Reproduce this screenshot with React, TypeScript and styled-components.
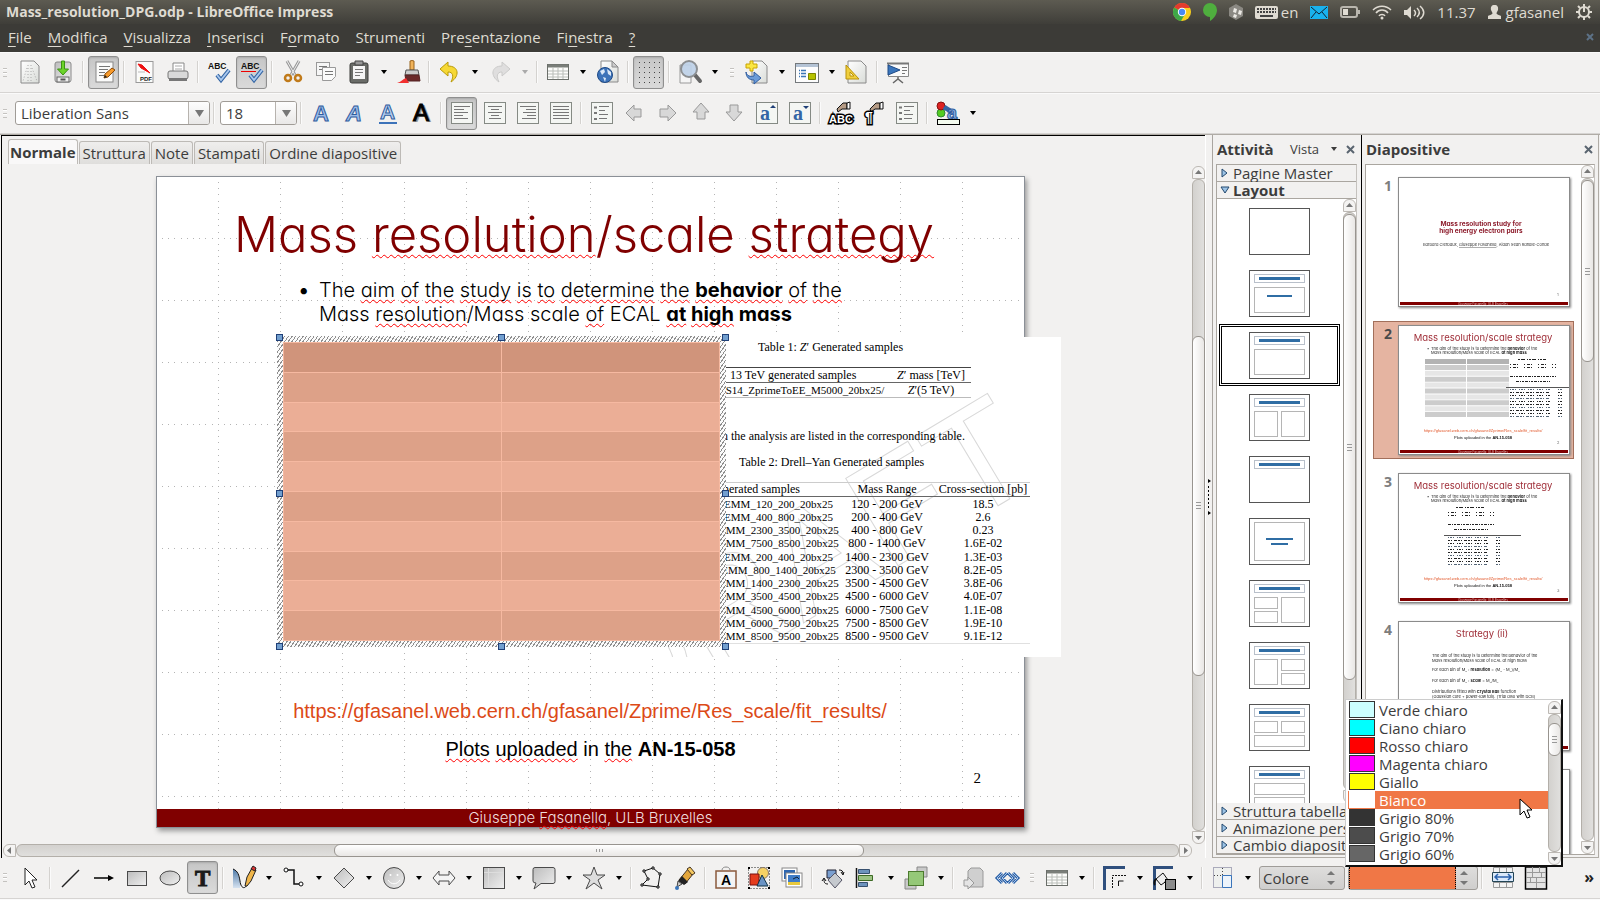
import React from "react";
import styled, { createGlobalStyle, css } from "styled-components";

const ui = `"Open Sans", "Noto Sans", sans-serif`;
const gothic = `Inter, "Open Sans", sans-serif`;
const book = `"Liberation Serif", serif`;

const Global = createGlobalStyle`
  * { box-sizing: border-box; }
  body { margin: 0; background: #f2f1f0; font: 15px/18px ${ui}; color: #3c3c3c; }
  button, input, select { font: inherit; color: inherit; margin: 0; padding: 0; border: 0; background: none; }
  ul { list-style: none; margin: 0; padding: 0; }
  h1, h2, p { margin: 0; font: inherit; }
`;

/* ---------- shell ---------- */
const Shell = styled.div`
  display: flex; flex-direction: column; height: 100vh; min-height: 640px; overflow: hidden;
`;
const Defs = styled.svg`position: absolute; width: 0; height: 0;`;
const TopPanel = styled.header`
  display: flex; align-items: center; justify-content: space-between; flex: none; height: 24px; padding: 0 8px 0 6px;
  background: linear-gradient(#5d5b51, #5a584f 10%, #3f3e39); color: #dfdbd2;
`;
const WindowTitle = styled.h1`font-size: 14px; font-weight: 700; white-space: nowrap;`;
const Tray = styled.div`display: flex; align-items: center; gap: 12px; font-size: 15px;`;
const TrayItem = styled.div<{ $gap?: number }>`display: flex; align-items: center; gap: ${p => p.$gap ?? 0}px; svg { display: block; }`;
const MenuBar = styled.nav`
  display: flex; align-items: center; flex: none; height: 28px; padding: 0 6px 2px 8px; gap: 16px; background: #3c3b37; color: #dfdbd2;
`;
const MenuItem = styled.button`font-size: 15px; line-height: 20px; white-space: nowrap; u { text-underline-offset: 3px; text-decoration-thickness: 1px; }`;
const MenuClose = styled.button`margin-left: auto; color: #5f7384; svg { display: block; }`;

/* ---------- toolbars ---------- */
const Toolbar = styled.div`
  display: flex; align-items: center; flex: none; height: 41px; overflow: hidden;
  background: #f2f1f0; border-bottom: 1px solid #d6d4d2; box-shadow: inset 0 1px #fafafa;
`;
const BottomBar = styled(Toolbar)`height: 42px; padding-bottom: 3px; overflow: visible; border-bottom: 0; box-shadow: inset 0 -1px #fafafa, inset 0 -2px #d6d4d2;`;
const Grip = styled.span<{ $wide?: boolean }>`
  flex: none; width: ${p => (p.$wide ? 17 : 13)}px; height: 9px;
  background: repeating-linear-gradient(#c4c2bf 0 1px, #fff 1px 2px, transparent 2px 4px) ${p => (p.$wide ? 7 : 3)}px 0 / 4px 9px no-repeat;
`;
const Rule = styled.span`flex: none; width: 8px; height: 22px; background: linear-gradient(90deg, #d4d2cf 1px, #fbfbfb 1px) 3px 0 / 2px 22px no-repeat;`;
const Tool = styled.button<{ $on?: boolean; $off?: boolean }>`
  display: flex; align-items: center; justify-content: center; flex: none; width: 31px; height: 33px; margin: 0 1px;
  border: 1px solid transparent; border-radius: 3px; opacity: ${p => (p.$off ? 0.45 : 1)};
  ${p => p.$on && css`background: linear-gradient(#c6c6c6, #dadada); border-color: #8f8f8f; box-shadow: inset 0 1px 2px #aaa;`}
  svg { width: 24px; height: 24px; display: block; overflow: visible; }
`;
const Arrow = styled.button<{ $off?: boolean }>`
  flex: none; width: 17px; height: 33px; display: flex; align-items: center; justify-content: center; color: ${p => (p.$off ? "#aaa" : "#000")};
  svg { display: block; }
`;
const Combo = styled.div<{ $w: number }>`
  display: flex; flex: none; width: ${p => p.$w}px; height: 24px; margin-left: 2px; border: 1px solid #a09c97; border-radius: 3px; background: #fff; overflow: hidden;
  input { flex: 1; min-width: 0; padding-left: 5px; font-size: 15px; }
  button { width: 21px; border-left: 1px solid #b7b3ae; background: linear-gradient(#fdfdfd, #e9e8e7); display: flex; align-items: center; justify-content: center; }
`;
const PickBox = styled.div<{ $w: number }>`
  position: relative; flex: none; width: ${p => p.$w}px; height: 24px; margin-left: 3px; border: 1px solid #9f9c98; border-radius: 3px;
  background: linear-gradient(#dedddc, #cfcecd);
  select { appearance: none; display: block; width: 100%; height: 22px; padding-left: 3px; font-size: 15px; line-height: 20px; }
`;
const Spin = styled.svg`position: absolute; right: 7px; top: 3px; pointer-events: none;`;
const FillSelect = styled.select`&& { width: 107px; background: #f07746; border-left: 1px dotted #000; border-right: 1px dotted #000; }`;
const More = styled.button`margin-left: auto; padding: 0 6px 2px; font-size: 16px; line-height: 16px; font-weight: 700; color: #222;`;

/* ---------- main area ---------- */
const Main = styled.main`display: flex; flex: 1; min-height: 0; border-top: 1px solid #b0aca6;`;
const Editor = styled.section`
  display: flex; flex: 1; min-width: 0; border-top: 1px solid #000; border-left: 1px solid #000; margin-left: 1px;
`;
const EditorPane = styled.div`flex: 1; min-width: 0; display: flex; flex-direction: column;`;
const ScrollSide = styled.div`flex: none; display: flex; padding: 30px 0 14px;`;
const Tabs = styled.div`display: flex; align-items: flex-end; gap: 1px; height: 28px; padding-left: 6px;`;
const Tab = styled.button<{ $on?: boolean }>`
  height: ${p => (p.$on ? 25 : 23)}px; padding: 0 ${p => (p.$on ? 1 : 3)}px 1px; font-size: 15px; white-space: nowrap; border: 1px solid #bdbab6; border-bottom: 0; border-radius: 3px 3px 0 0;
  font-weight: ${p => (p.$on ? 700 : 400)}; background: ${p => (p.$on ? "#f9f8f8" : "linear-gradient(#efeeed, #dfdedc)")};
`;
const Workspace = styled.div`flex: 1; min-height: 0; display: flex; justify-content: center; align-items: flex-start; padding: 12px 13px 0 0;`;
const Slide = styled.article`
  position: relative; flex: none; width: 869px; height: 652px; background: #fff; border: 1px solid #8b9097; box-shadow: 2px 3px 5px #999;
  color: #000;
`;
const Dots = styled.svg`position: absolute; inset: 0; width: 100%; height: 100%;`;

const Title = styled.h2`
  position: absolute; left: 0; right: 0; top: 28px; padding-right: 13px; text-align: center; white-space: nowrap;
  font: 300 49px/60px ${gothic}; font-feature-settings: "cv11"; color: #800000;
`;
const Typo = styled.span`text-decoration: underline wavy #f00 1px; text-underline-offset: 2px; text-decoration-skip-ink: none;`;
const Bullets = styled.ul`
  position: absolute; left: 162px; top: 101px; font: 300 20px/24px ${gothic}; font-feature-settings: "cv11"; white-space: nowrap;
  li { position: relative; } li::before { content: "•"; position: absolute; left: -20px; font-weight: 700; } b { font-weight: 700; }
`;
const Inset = styled.section`
  position: absolute; left: 483px; top: 160px; width: 421px; height: 320px; background: #fff; overflow: hidden; font: 12px/14px ${book};
  > svg { position: absolute; inset: 0; }
`;
const Caption = styled.p<{ $x: number; $y: number }>`position: absolute; left: ${p => p.$x}px; top: ${p => p.$y}px; white-space: nowrap;`;
const Data = styled.table<{ $y: number; $w: number }>`
  position: absolute; left: 79px; top: ${p => p.$y}px; width: ${p => p.$w}px; border-collapse: collapse; table-layout: fixed; font-size: 12px;
  border-top: 1px solid #444; border-bottom: 1px solid #bbb;
  th { font-weight: 400; border-bottom: 1px solid #666; } th, td { padding: 0; text-align: center; white-space: nowrap; }
  th:first-child { text-align: left; } td:first-child { font-size: 11px; }
`;
const Sample = styled(Data)`tr { height: 15px; line-height: 14px; } th:first-child { padding-left: 11px; }`;
const Yan = styled(Data)`
  height: 162px; border-top-color: #ccc; border-bottom-color: #e0e0e0; th { line-height: 13px; } td { line-height: 12px; }
  th:first-child { padding-left: 4px; }
`;

const Frame = styled.div`
  position: absolute; left: 120px; top: 159px; width: 449px; height: 311px; padding: 6px;
  background: repeating-linear-gradient(125deg, #8f8f8f 0 1px, #fbfbfb 1px 3px);
`;
const Grid = styled.table`
  width: 100%; height: 100%; border-collapse: collapse; background: #ebae96;
  td { padding: 0; border: 1px solid #f6b9a1; } tr:nth-child(even) { background: #dda188; } tr:first-child { background: #d0947b; }
`;
const Knob = styled.i<{ $x: number; $y: number }>`
  position: absolute; left: ${p => p.$x}%; top: ${p => p.$y}%; width: 7px; height: 7px; margin: ${p => (p.$y === 100 ? -4 : -2)}px 0 0 ${p => (p.$x ? -4 : -1)}px;
  background: #729fcf; border: 1px solid #1f4078;
`;
const Address = styled.a`position: absolute; left: 0; right: 0; top: 522px; padding-right: 1px; text-align: center; font: 20px/24px "Liberation Sans", sans-serif; color: #dc4a17; text-decoration: none;`;
const Plots = styled.p`position: absolute; left: 0; right: 0; top: 560px; text-align: center; font: 20px/24px "Liberation Sans", sans-serif;`;
const PageNo = styled.span`position: absolute; right: 43px; top: 592px; font: 15px/18px ${book};`;
const SlideFoot = styled.footer`
  position: absolute; left: 0; right: 0; bottom: 0; height: 18px; background: #800000; color: #f0dede; text-align: center; font: 300 15px/17px ${gothic}; font-feature-settings: "cv11";
`;

/* ---------- scroll bars ---------- */
const VBar = styled.div`display: flex; flex-direction: column; flex: none; width: 13px; min-height: 0;`;
const HBar = styled.div`display: flex; flex: none; height: 13px; margin: 0 0 1px 1px;`;
const End = styled.button<{ $r: string }>`
  flex: none; width: 13px; height: 13px; display: flex; align-items: center; justify-content: center; border: 1px solid #bdb9b4; border-radius: ${p => p.$r}; background: #f4f3f2; color: #777;
`;
const Trough = styled.div<{ $h?: boolean }>`
  display: flex; flex-direction: ${p => (p.$h ? "row" : "column")}; flex: 1; min-height: 0; border: 1px solid #b3afa9; border-radius: 6px;
  background: linear-gradient(${p => (p.$h ? "180deg" : "90deg")}, #d3d1ce, #e0dfdd);
`;
const Space = styled.span<{ $n: number }>`flex: ${p => p.$n} 1 0;`;
const Thumb = styled.span<{ $n: number; $h?: boolean }>`
  flex: ${p => p.$n} 1 0; margin: ${p => (p.$h ? "-1px 0" : "0 -1px")}; border: 1px solid #98948f; border-radius: 6px; display: flex; align-items: center; justify-content: center;
  background: linear-gradient(${p => (p.$h ? "180deg" : "90deg")}, #fff, #e9e7e5);
  &::after { content: ""; ${p => (p.$h
    ? "width: 7px; height: 3px; background: repeating-linear-gradient(90deg, #999 0 1px, transparent 1px 3px);"
    : "width: 5px; height: 7px; background: repeating-linear-gradient(#999 0 1px, transparent 1px 3px);")} }
`;

/* ---------- side panels ---------- */
const Splitter = styled.div`
  flex: none; width: 8px; border-left: 1px solid #fff; border-right: 1px solid #a9a5a0; display: flex; align-items: center; justify-content: center; svg { display: block; }
`;
const Side = styled.aside<{ $w: number; $line?: boolean }>`
  display: flex; flex-direction: column; flex: none; width: ${p => p.$w}px; padding: 0 4px 2px 3px; border-bottom: 1px solid #b0aca6;
  ${p => p.$line && css`border-left: 1px solid #000; border-right: 1px solid #b0aca6; padding-right: 3px; margin-right: 1px;`}
`;
const SideHead = styled.div`
  display: flex; align-items: center; flex: none; height: 29px; padding: 0 2px 1px 1px; gap: 9px;
  h2 { font-size: 15px; font-weight: 700; margin-right: auto; } button { display: flex; align-items: center; gap: 12px; font-size: 13px; color: #3c3c3c; }
`;
const SideBody = styled.div`display: flex; flex-direction: column; flex: 1; min-height: 0; overflow: hidden; border: 1px solid #aaa6a0; border-right-color: #c5c2be;`;
const Fold = styled.button<{ $open?: boolean }>`
  flex: none; display: flex; align-items: center; gap: 3px; height: 17px; padding-left: 3px; background: #f2f1f0; border-bottom: 1px solid #aaa6a0; white-space: nowrap; font-size: 15px; line-height: 16px;
  font-weight: ${p => (p.$open ? 700 : 400)}; svg { flex: none; }
`;
const ListRow = styled.div`display: flex; flex: 1; min-height: 0; background: #fff;`;
const Scroll = styled.ul<{ $p: string; $gap?: number }>`flex: 1; min-width: 0; min-height: 0; overflow: hidden; padding: ${p => p.$p}; display: flex; flex-direction: column; gap: ${p => p.$gap ?? 0}px;`;
const LayoutCell = styled.button<{ $on?: boolean }>`
  display: flex; align-items: center; justify-content: center; width: 100%; height: 62px; border: ${p => (p.$on ? "3px double #000" : "3px solid transparent")}; svg { display: block; }
`;
const ThumbItem = styled.button<{ $on?: boolean }>`
  display: flex; align-items: flex-start; justify-content: flex-end; gap: 6px; width: 201px; height: 138px; padding: 3px; border: 1px solid ${p => (p.$on ? "#a26f5b" : "transparent")};
  background: ${p => (p.$on ? "#e5b4a1" : "transparent")}; font-weight: 700; font-size: 14px; color: ${p => (p.$on ? "#4a4a4a" : "#7d7d7d")};
  svg { flex: none; display: block; font-weight: 400; filter: drop-shadow(1px 1px 1px #888); }
`;

/* ---------- colour list ---------- */
const Popup = styled.div`
  position: absolute; right: -86px; left: -4px; bottom: 100%; z-index: 3; display: flex; height: 168px; padding: 1px 0 0 2px; background: #fff;
  border: 1px solid #ccc; border-right: 2px solid #111; border-bottom: 2px solid #111; color: #3c3c3c;
  ul { flex: 1; min-width: 0; }
`;
const Swatch = styled.li<{ $c: string; $on?: boolean }>`
  display: flex; align-items: center; gap: 4px; height: 18px; padding-left: 1px; font-size: 15px; white-space: nowrap;
  color: ${p => (p.$on ? "#fff" : "#3c3c3c")}; background: ${p => (p.$on ? "#f07746" : "#fff")};
  &::before { content: ""; width: 24px; height: 15px; background: ${p => p.$c}; border: 1px solid ${p => (p.$on ? "#fff" : "#333")}; }
`;
const Pointer = styled.svg`position: absolute; left: 173px; top: 98px;`;

/* ---------- drawings ---------- */
const Caret = () => <svg width="6" height="4"><path d="M0 0h6L3 4z" fill="currentColor" /></svg>;
const Cross = () => <svg width="9" height="9"><path d="M1 1l7 7M8 1l-7 7" stroke="#5a6570" strokeWidth="2" /></svg>;
const Tip = ({ d }: { d: string }) => <svg width="7" height="7"><path d={d} fill="currentColor" /></svg>;
const UP = "M0 5h7L3.5 1z", DOWN = "M0 2h7L3.5 6z", LEFT = "M5 0v7L1 3.5z", RIGHT = "M2 0v7L6 3.5z";

const sheet = <path d="M3 1h13l5 5v17H3z" fill="url(#paper)" stroke="#8a8a8a" />;
const lines = (ys: number[][]) => <path d={ys.map(([x, y, w]) => `M${x} ${y}h${w}`).join("")} stroke="#777" />;
const box = <rect x="1.5" y="1.5" width="21" height="21" fill="#f4f6f3" stroke="#858a84" />;
const txt = (s: string, x: number, y: number, size: number, fill: string, extra: object = {}) => (
  <text x={x} y={y} fontSize={size} fill={fill} fontFamily="Liberation Sans, sans-serif" fontWeight="700" {...extra}>{s}</text>
);
const abc = <>{txt("ABC", 1, 9, 8.5, "#111")}<path d="M10 15l4 5 8-10" fill="none" stroke="#3465a4" strokeWidth="4" /><path d="M10 15l4 5 8-10" fill="none" stroke="#a9c8ee" strokeWidth="2" /></>;
const blue = { stroke: "#2f5c9e", strokeWidth: 1 };
const sheetGrid = <><rect x="1.5" y="4.5" width="21" height="15" fill="#fdfdfb" stroke="#6b6f6a" /><path d="M2 6h20" stroke="#7a7e79" strokeWidth="3" /><path d="M2 11h20M2 14h20M2 17h20M7 8v11M12 8v11M17 8v11" stroke="#b9bdb8" /></>;
const metal = { fill: "url(#steel)", stroke: "#4a4a4a" };
const hand = <><path d="M8 8l6-6h4v6h-5l-4 3z" fill="#b59b85" stroke="#111" /><path d="M18 2l3-1v7h-3z" fill="#fff" stroke="#111" /></>;

const art: Record<string, React.ReactNode> = {
  fresh: <>{sheet}<path d="M10 5v16M13 5v16M9 8L5 21M14 8l5 13" stroke="#aaa" strokeDasharray="1 2" /></>,
  save: <><rect x="4" y="2" width="16" height="20" rx="2" fill="url(#steel)" stroke="#888" /><rect x="6" y="17" width="12" height="5" fill="#eee" stroke="#666" /><path d="M9.5 19.5h5" stroke="#555" strokeWidth="2" /><path d="M10.5 1h3v8h4L12 15 6.5 9h4z" fill="#6cd32a" stroke="#3b9412" /></>,
  edit: <><rect x="4" y="2" width="17" height="20" fill="#fbfbfa" stroke="#888" />{lines([[7, 6.5, 11], [7, 9.5, 9], [7, 12.5, 6], [7, 15.5, 5]])}<path d="M12 18l1-4 7-6 3 2-7 7z" fill="#f79a2b" stroke="#8a4a06" /><path d="M12 18l1-3 2 2z" fill="#222" /></>,
  pdf: <><rect x="3" y="1.5" width="17" height="21" fill="#fbfbfa" stroke="#999" /><path d="M5 4l4 1 8 8-9-5z" fill="#e11" stroke="#e11" /><path d="M5 12h7" stroke="#bbb" />{txt("PDF", 7, 21, 6, "#222")}</>,
  print: <><path d="M7 3h11v10H7z" fill="#fff" stroke="#888" /><path d="M9 6h7M9 9h7" stroke="#aaa" /><rect x="2" y="11" width="20" height="8" rx="2" fill="#d9d9d9" stroke="#777" /><path d="M3 18h18v3H3z" fill="#777" /></>,
  spell: abc,
  auto: <>{abc}<path d="M1 11l1 1 1-1 1 1 1-1 1 1 1-1 1 1 1-1 1 1 1-1 1 1 1-1 1 1 1-1 1 1" stroke="#e00" fill="none" /></>,
  cut: <><path d="M6 1l8 14M18 1l-8 14" stroke="#999" strokeWidth="3" /><path d="M6 1l8 14M18 1l-8 14" stroke="#eee" /><circle cx="7" cy="18" r="3" fill="none" stroke="#c07a1a" strokeWidth="2.500" /><circle cx="17" cy="18" r="3" fill="none" stroke="#c07a1a" strokeWidth="2.500" /></>,
  copy: <><rect x="2.5" y="2.5" width="13" height="13" fill="#f6f6f6" stroke="#999" />{lines([[5, 6.5, 8], [5, 9.5, 3]])}<path d="M8.5 7.5h13v9l-4 4h-9z" fill="#fafafa" stroke="#999" />{lines([[11, 11.5, 8], [11, 14.5, 8]])}</>,
  paste: <><rect x="3" y="3" width="18" height="20" rx="2" fill="#6a6c68" stroke="#3c3d3b" /><path d="M6 6h12v13H6z" fill="#f5f5f5" />{lines([[8, 9.5, 8], [8, 12.5, 8], [8, 15.5, 5]])}<path d="M8 1h8v4H8z" fill="#999" stroke="#444" /></>,
  brush: <><path d="M13 1q2-1 4 0v9h-4z" fill="#f0b35a" stroke="#99621a" /><path d="M9 10h12l1 5H8z" fill="#ccc" stroke="#555" /><path d="M8 15h14l1 6H9z" fill="#6b2a2a" stroke="#522" /><path d="M0 23c4-1 6-4 9-5l3 5z" fill="#f23030" /></>,
  undo: <path d="M10 2L2 9l8 7v-4c5 0 6 4 3 10 9-6 8-16-3-16z" fill="#f6d835" stroke="#b99a08" />,
  redo: <path d="M14 2l8 7-8 7v-4c-5 0-6 4-3 10C2 16 3 6 14 6z" fill="#c9c9c9" stroke="#9a9a9a" />,
  table: sheetGrid,
  globe: <><path d="M5 1h11l6 6v15H5z" fill="url(#paper)" stroke="#8a8a8a" /><path d="M16 1v6h6z" fill="#ccc" stroke="#8a8a8a" /><circle cx="9" cy="15" r="7.5" fill="#3d73b9" stroke="#1f4a86" /><path d="M4 11l4-2 1 3-3 3zM11 9l4 3 0 4-3-2zM7 17l3 1-1 4z" fill="#dce9f7" /></>,
  dots: <path d="M2 2.5h21M2 7.5h21M2 12.5h21M2 17.5h21M2 22.5h21" stroke="#444" strokeDasharray="1 4" />,
  zoom: <><path d="M2 5h11v18H2z" fill="#f5f5f5" stroke="#999" /><path d="M17 15l5 6" stroke="#666" strokeWidth="4" strokeLinecap="round" /><circle cx="11" cy="9" r="8" fill="#bcd0e8" fillOpacity=".9" stroke="#8c8f92" strokeWidth="2" /></>,
  addSlide: <><path d="M7 1h10l5 5v17H7z" fill="url(#paper)" stroke="#8a8a8a" /><path d="M5 1h3v3h4v4H8v3H5V8H1V4h4z" fill="#fbe742" stroke="#c8a205" /><path d="M1 12c1 4 4 5 8 4v-4l7 6-7 6v-4c-5 0-8-3-8-8z" fill="#6a9bd8" stroke="#2f5c9e" /></>,
  layout: <><rect x=".5" y="3.5" width="23" height="19" fill="#fdfdfd" stroke="#75797c" /><path d="M1 5.5h22" stroke="#b4c3d5" strokeWidth="3" /><path d="M4 10.5h7M4 13.5h7M4 16.5h7" stroke="#3b76b5" strokeWidth="1.5" strokeDasharray="1 1 9" /><path d="M13.5 13.5h7v6h-7z" fill="#b6c200" stroke="#7b8400" /></>,
  setsq: <>{sheet}<path d="M1 5v14h13z" fill="#f0cf3e" stroke="#b9920a" /><path d="M5 12v4h4z" fill="#fff8cc" stroke="#b9920a" /></>,
  screen: <><path d="M2.5 3.5h20v13h-20z" fill="#fafafa" stroke="#888" /><path d="M1 3.5h22" stroke="#777" strokeWidth="2" /><path d="M2 5l12 5L2 15z" fill="#3a75bb" stroke="#1f4a86" />{lines([[16, 7.5, 5], [16, 10.5, 5], [16, 13.5, 3]])}<path d="M12 17v3M7 23l5-4 5 4" stroke="#666" fill="none" strokeWidth="1.5" /></>,
  bold: txt("A", 3, 20, 22, "#9dbde8", blue),
  italic: txt("A", 3, 20, 22, "#9dbde8", { ...blue, fontStyle: "italic" }),
  under: <>{txt("A", 4, 18, 21, "#b9d2f1", blue)}<path d="M3 22h18" stroke="#3d73b9" strokeWidth="2" /></>,
  shade: <>{txt("A", 6, 21, 24, "#999", { fontWeight: 400 })}{txt("A", 4, 20, 24, "#000", { fontWeight: 400, stroke: "#000" })}</>,
  al: <>{box}{lines([[4, 5.5, 16], [4, 8.5, 10], [4, 11.5, 14], [4, 14.5, 9], [4, 17.5, 14]])}</>,
  ac: <>{box}{lines([[5, 5.5, 14], [8, 8.5, 8], [5, 11.5, 14], [8, 14.5, 8], [6, 17.5, 12]])}</>,
  ar: <>{box}{lines([[4, 5.5, 16], [10, 8.5, 10], [7, 11.5, 13], [11, 14.5, 9], [6, 17.5, 14]])}</>,
  aj: <>{box}{lines([[4, 5.5, 16], [4, 8.5, 16], [4, 11.5, 16], [4, 14.5, 16], [4, 17.5, 16]])}</>,
  list: <>{box}{lines([[9, 5.5, 10], [9, 9.5, 6], [9, 13.5, 9], [9, 17.5, 8]])}<path d="M4 6.5h3M4 12h3M4 18h3" stroke="#777" strokeWidth="2" /></>,
  left: <path d="M3 12l8-8v4h7v8h-7v4z" fill="#d8d8d8" stroke="#999" />,
  right: <path d="M20 12l-8-8v4H4v8h8v4z" fill="#d8d8d8" stroke="#999" />,
  up: <path d="M12 2l8 9h-4v7H8v-7H4z" fill="#d8d8d8" stroke="#999" />,
  down: <path d="M12 20l8-9h-4V4H8v7H4z" fill="#d8d8d8" stroke="#999" />,
  grow: <>{box}{txt("a", 5, 19, 20, "#3465a4", { fontFamily: "Liberation Serif, serif" })}<path d="M15 7l3-3 3 3z" fill="#1f3f77" /></>,
  shrink: <>{box}{txt("a", 5, 19, 20, "#3465a4", { fontFamily: "Liberation Serif, serif" })}<path d="M15 5l3 3 3-3z" fill="#1f3f77" /></>,
  charFmt: <>{hand}{txt("ABC", 0, 22, 11, "#fff", { stroke: "#000", strokeWidth: 3, paintOrder: "stroke" })}</>,
  paraFmt: <>{hand}{txt("¶", 3, 21, 14, "#fff", { stroke: "#000", strokeWidth: 3, paintOrder: "stroke" })}</>,
  palette: <><circle cx="5" cy="12" r="4" fill="#5c2" stroke="#383" /><circle cx="5" cy="5" r="4" fill="#d22" stroke="#811" /><path d="M8 6l8 5" stroke="#3465a4" strokeWidth="5" fill="none" />{txt("a", 11, 18, 18, "#8db3e2", blue)}<rect x="1.5" y="18.5" width="22" height="5" fill="#f4fbef" stroke="#000" /></>,

  arrowSel: <path d="M7 2v17l4-4 3 7 3-1-3-7h5z" fill="#fff" stroke="#222" />,
  line: <path d="M3 21L20 4" stroke="#222" strokeWidth="1.5" />,
  arrowLine: <><path d="M2 12h17" stroke="#000" strokeWidth="1.5" /><path d="M16 9l6 3-6 3z" /></>,
  rect: <rect x="2.5" y="5.5" width="19" height="14" {...metal} />,
  oval: <ellipse cx="12" cy="12" rx="10" ry="7" {...metal} />,
  text: txt("T", 4, 20, 23, "#1a1a1a", { fontFamily: "Liberation Serif, serif", stroke: "#1a1a1a" }),
  curve: <><path d="M1 3c5 2 6 6 7 14v5H1z" fill="url(#sea)" /><path d="M1 3c5 2 6 6 7 12 1 8 5 8 7 4" stroke="#111" fill="none" /><path d="M13 20l2-9 5-9 4 2-5 11-4 5z" fill="#f0b64a" stroke="#222" /><path d="M19 3l2-3 3 2-1 3z" fill="#d33" stroke="#222" /></>,
  connector: <><path d="M5 4h7v14h7" stroke="#111" fill="none" strokeWidth="1.5" /><circle cx="4" cy="4" r="2" fill="#fff" stroke="#111" /><circle cx="19" cy="18" r="2" fill="#fff" stroke="#111" /></>,
  diamond: <path d="M12 2l10 10-10 10L2 12z" {...metal} />,
  smile: <><circle cx="12" cy="12" r="10.5" {...metal} /><circle cx="8.5" cy="9" r="1" fill="#fff" /><circle cx="15.5" cy="9" r="1" fill="#fff" /><path d="M6 14c3 5 9 5 12 0" stroke="#fff" fill="none" /></>,
  dbl: <path d="M1 12l6-7v4h10V5l6 7-6 7v-4H7v4z" {...metal} fill="#f4f4f4" />,
  flow: <><rect x="1.5" y="1.5" width="21" height="21" {...metal} /><path d="M6.5 2v20M2 6.5h20" stroke="#ddd" /></>,
  callout: <path d="M3 1.5h18q2 0 2 2v12q0 2-2 2H9L2 23l2-6q-3 0-3-2V3.5q0-2 2-2z" {...metal} />,
  star: <path d="M12 1l3 8h8l-7 5 4 9-8-6-8 6 4-9-7-5h8z" {...metal} fill="#ddd" />,
  points: <><path d="M4 5l9-3 7 6-2 13L2 19l6-6z" fill="none" stroke="#111" /><path d="M3 4h2v2H3zM12 1h2v2h-2zM19 7h2v2h-2zM17 20h2v2h-2zM1 18h2v2H1zM7 12h2v2H7z" fill="#fff" stroke="#111" /></>,
  glue: <><path d="M6 14L15 3l5 5-8 10z" fill="#e3a63c" stroke="#432" /><path d="M14 3l3-2 5 6-3 2z" fill="#f4c860" stroke="#432" /><path d="M9 10l6 6-4 3-6-4z" fill="#222" /><path d="M5 15l4 3-5 3z" fill="#ccc" stroke="#444" /><circle cx="4" cy="22" r="2" fill="#3a75bb" /></>,
  fontwork: <><path d="M8 4c0-4 8-4 8 0" stroke="#888" fill="none" /><rect x="2" y="5" width="20" height="17" fill="#f3f3f3" stroke="#8b5a3c" strokeWidth="1.5" />{txt("A", 7, 19, 14, "#000")}</>,
  shapes: <><rect x="1.5" y="1.5" width="21" height="21" fill="none" stroke="#222" strokeDasharray="1 2" /><path d="M1 1h2v2H1zM21 1h2v2h-2zM1 21h2v2H1zM21 21h2v2h-2z" /><circle cx="16" cy="7" r="5.5" fill="#f6d264" stroke="#876" /><path d="M3 8h9v11H3z" fill="#e43c1e" stroke="#711" /><path d="M15 9l6 11H10z" fill="#6a93c4" stroke="#134" /></>,
  gallery: <><rect x="2" y="2" width="15" height="13" fill="#fff" stroke="#888" /><path d="M4 4h11v9H4z" fill="#2d66b0" /><rect x="6" y="7" width="16" height="14" fill="#fff" stroke="#888" /><path d="M8 9h12v10H8z" fill="#3f7cc7" /><path d="M8 16h12v3H8z" fill="#e9c93c" /><path d="M13 13l4-2 2 2" stroke="#123" fill="none" /></>,
  rotate: <><path d="M6 4h9v8H6z" fill="#7a9fd0" stroke="#223" /><path d="M14 7l7 7-7 8-7-8z" fill="#c5c9ce" stroke="#556" /><path d="M18 4c3 0 4 1 4 4M20 6l2 3 1-3M3 13c0 4 1 5 4 5M1 15l2-3 2 3" stroke="#111" fill="none" /></>,
  align: <><path d="M2.5 2v20" stroke="#111" strokeWidth="1.5" /><path d="M4.5 3.5h11v4h-11zM4.5 16.5h9v4h-9z" fill="#6d93bd" stroke="#37506e" /><path d="M4.5 9.5h14v5h-14z" fill="#9cc283" stroke="#3d6a24" /></>,
  arrange: <><path d="M13 1h10v10H13zM1 13h11v10H1z" fill="#c9c9c9" stroke="#888" /><rect x="4.5" y="5.5" width="15" height="14" fill="#95c878" stroke="#4c7a2e" /></>,
  extrude: <><path d="M9 2h9l3 3v16H6V5z" fill="#cfcfcf" stroke="#999" /><path d="M2 14h4v-3l6 6-6 6v-3H2z" fill="#e4e4e4" stroke="#999" /></>,
  inter: <><path d="M7 7l-5 5 5 5M12 7l-5 5 5 5M13 7l5 5-5 5M18 7l5 5-5 5" fill="none" stroke="#2f63a8" strokeWidth="3" /><path d="M7 7l-5 5 5 5M12 7l-5 5 5 5M13 7l5 5-5 5M18 7l5 5-5 5" fill="none" stroke="#a4c4ea" /></>,
  border: <><path d="M1.5 24V1.5H22" stroke="#2f4f7d" strokeWidth="3" fill="none" /><path d="M9.5 22V9.5H23" stroke="#111" strokeDasharray="2 1" fill="none" /><path d="M15.5 20v-5h5" stroke="#111" fill="none" /></>,
  bucket: <><path d="M1.5 24V1.5H20" stroke="#2f4f7d" strokeWidth="3" fill="none" /><path d="M3 13l7-6 5 7-7 5z" fill="#eee" stroke="#111" /><path d="M3 13c-2 2-2 5-1 6M12 15l4 2" stroke="#111" strokeWidth="2" fill="none" /><rect x="12.5" y="13.5" width="10" height="10" fill="#8b8b8b" stroke="#000" /></>,
  cell: <><rect x="2.5" y="1.5" width="18" height="20" fill="#eef0ee" stroke="#aab" /><path d="M11.5 2v20M3 9.5h17" stroke="#444" strokeDasharray="1 2" /><path d="M11.5 21.5v-12h9v12z" fill="#edf4fb" stroke="#3a75bb" /></>,
  merge: <><path d="M2.5 1.5h19v20h-19zM2 6.5h20M2 16.5h20M8.5 2v20M15.5 2v20" fill="#f3f3f3" stroke="#999" /><path d="M1.5 6.5h21v9h-21z" fill="#dceafa" stroke="#245" /><path d="M4 11h16M7 8l-3 3 3 3M17 8l3 3-3 3" stroke="#2a62ad" strokeWidth="1.5" fill="none" /></>,
  split: <><rect x="1.5" y="1" width="21" height="22" fill="#e4e4e4" stroke="#000" strokeWidth="1.5" /><path d="M2 6.5h20M2 11.5h20M2 16.5h20M8.5 1v10M15.5 1v5M12.5 11v11M17.5 7v5M6.5 12v5" stroke="#999" /></>,
};

/* Flags after ":" — "*" pressed, "-" disabled, "v" adds a drop-down arrow. */
function Tools({ items }: { items: string[] }) {
  return (
    <>
      {items.map((raw, i) => {
        if (raw === "|") return <Rule key={i} />;
        if (raw === "::") return <Grip key={i} $wide />;
        const [name, flags = ""] = raw.split(":");
        const off = flags.includes("-");
        return (
          <React.Fragment key={i}>
            <Tool $on={flags.includes("*")} $off={off} aria-label={name} aria-pressed={flags.includes("*")}>
              <svg viewBox="0 0 24 24">{art[name]}</svg>
            </Tool>
            {flags.includes("v") && <Arrow $off={off} aria-label={`${name} menu`}><Caret /></Arrow>}
          </React.Fragment>
        );
      })}
    </>
  );
}

function VScroll({ a, t, b }: { a: number; t: number; b: number }) {
  return (
    <VBar>
      <End $r="6px 6px 0 0" aria-label="Su"><Tip d={UP} /></End>
      <Trough><Space $n={a} /><Thumb $n={t} /><Space $n={b} /></Trough>
      <End $r="0 0 6px 6px" aria-label="Giù"><Tip d={DOWN} /></End>
    </VBar>
  );
}

const menus: [string, string, string][] = [
  ["", "F", "ile"], ["", "M", "odifica"], ["", "V", "isualizza"], ["", "I", "nserisci"], ["F", "o", "rmato"],
  ["Strumenti", "", ""], ["Pre", "s", "entazione"], ["Fi", "n", "estra"], ["", "?", ""],
];

const yan = [
  ["EMM_120_200_20bx25", "120 - 200 GeV", "18.5"], ["EMM_400_800_20bx25", "200 - 400 GeV", "2.6"],
  ["EMM_2300_3500_20bx25", "400 - 800 GeV", "0.23"], ["EMM_7500_8500_20bx25", "800 - 1400 GeV", "1.6E-02"],
  ["EMM_200_400_20bx25", "1400 - 2300 GeV", "1.3E-03"], ["EMM_800_1400_20bx25", "2300 - 3500 GeV", "8.2E-05"],
  ["EMM_1400_2300_20bx25", "3500 - 4500 GeV", "3.8E-06"], ["EMM_3500_4500_20bx25", "4500 - 6000 GeV", "4.0E-07"],
  ["EMM_4500_6000_20bx25", "6000 - 7500 GeV", "1.1E-08"], ["EMM_6000_7500_20bx25", "7500 - 8500 GeV", "1.9E-10"],
  ["EMM_8500_9500_20bx25", "8500 - 9500 GeV", "9.1E-12"],
];

const colours: [string, string][] = [
  ["Verde chiaro", "#ccffff"], ["Ciano chiaro", "#00ffff"], ["Rosso chiaro", "#ff0000"], ["Magenta chiaro", "#ff00ff"], ["Giallo", "#ffff00"],
  ["Bianco", "#ffffff"], ["Grigio 80%", "#333333"], ["Grigio 70%", "#4c4c4c"], ["Grigio 60%", "#666666"],
];

type Box = [number, number, number, number];
const head = true;
const layouts: { head?: boolean; boxes: Box[]; bars?: Box[] }[] = [
  { boxes: [] },
  { head, boxes: [[5, 17, 50, 25]], bars: [[18, 25, 25, 2]] },
  { head, boxes: [[5, 17, 50, 25]] },
  { head, boxes: [[5, 17, 23, 25], [32, 17, 23, 25]] },
  { head, boxes: [] },
  { boxes: [[5, 4, 50, 38]], bars: [[17, 20, 27, 2], [22, 25, 17, 2]] },
  { head, boxes: [[5, 17, 23, 11], [5, 31, 23, 11], [32, 17, 23, 25]] },
  { head, boxes: [[5, 17, 23, 25], [32, 17, 23, 11], [32, 31, 23, 11]] },
  { head, boxes: [[5, 17, 23, 11], [32, 17, 23, 11], [5, 31, 50, 11]] },
  { head, boxes: [[5, 17, 50, 11], [5, 31, 50, 11]] },
];

function LayoutArt({ head, boxes, bars = [] }: (typeof layouts)[number]) {
  return (
    <svg width="61" height="47">
      <rect x=".5" y=".5" width="60" height="46" fill="#fff" stroke="#555" />
      {head && <><rect x="5.5" y="4.5" width="50" height="8" fill="#fff" stroke="#b9c0ca" /><path d="M10 8.5h41" stroke="#2f6da4" strokeWidth="3" /></>}
      {boxes.map(([x, y, w, h], i) => <rect key={i} x={x + 0.5} y={y + 0.5} width={w} height={h} fill="#fff" stroke="#b5b5b5" />)}
      {bars.map(([x, y, w, h], i) => <rect key={i} x={x} y={y} width={w} height={h} fill="#2f6da4" />)}
    </svg>
  );
}

const MiniSvg = styled.svg`font-family: ${gothic}; font-feature-settings: "cv11";`;
function Speckle({ x }: { x: number }) {
  return (
    <g stroke="#222" fill="none" strokeWidth="1">
      <path d={`M${x + 8} 34.5h28`} strokeDasharray="2 1 4 2 1 1" />
      <path d={`M${x} 39.5h46M${x} 42.5h46`} strokeDasharray="1 2 3 1 1 6" />
      <path d={`M${x} 51.5h46M${x + 6} 56.5h34`} strokeDasharray="3 1 1 1 2 1" />
      <path d={`M${x - 4} 62.5h${x > 100 ? 63 : 77}`} stroke="#555" />
      {[64, 67, 70, 73, 76, 79, 82, 85, 88, 91].map((y, i) => (
        <path key={y} d={`M${x} ${y + 0.5}h40M${x + 48} ${y + 0.5}h5`} strokeDasharray={i % 2 ? "2 1 1 2 3 1" : "1 1 2 1 1 3"} stroke={i % 3 ? "#222" : "#567"} />
      ))}
    </g>
  );
}
function MiniSlide({ n }: { n: number }) {
  return (
    <MiniSvg width="172" height="130">
      <rect x=".5" y=".5" width="171" height="129" fill="#fff" stroke="#8b8b8b" />
      {n === 1 && (
        <g textAnchor="middle">
          <text x="83" y="49" fontSize="6.500" fontWeight="700" fill="#8c1a2a">Mass resolution study for</text>
          <text x="83" y="56" fontSize="6.500" fontWeight="700" fill="#8c1a2a">high energy electron pairs</text>
          <text x="88" y="69" fontSize="4" fill="#333">Barbara Clerbaux, <tspan textDecoration="underline">Giuseppe Fasanella</tspan>, Aidan Sean Randle-Conde</text>
        </g>
      )}
      {(n === 2 || n === 3) && (
        <>
          <text x="85" y="16" fontSize="9.500" fill="#a0303a" textAnchor="middle">Mass resolution/scale strategy</text>
          <g fontSize="4" fill="#222">
            <text x="29" y="25">•</text>
            <text x="33" y="25">The aim of the study is to determine the <tspan fontWeight="700">behavior</tspan> of the</text>
            <text x="33" y="29">Mass resolution/Mass scale of ECAL <tspan fontWeight="700">at high mass</tspan></text>
          </g>
          {n === 2 && [0, 1, 2, 3, 4, 5, 6, 7, 8, 9].map(i => (
            <path key={i} d={`M27 ${36.5 + i * 5.9}h41M69 ${36.5 + i * 5.9}h42`} strokeWidth="5" stroke={i === 0 ? "#b3b3b3" : i % 2 ? "#cccccc" : "#e6e6e6"} />
          ))}
          <Speckle x={n === 2 ? 112 : 50} />
          <g textAnchor="middle" fontFamily="Liberation Sans, sans-serif">
            <text x="85" y="107" fontSize="4" fill="#e2592c">https://gfasanel.web.cern.ch/gfasanel/Zprime/Res_scale/fit_results/</text>
            <text x="85" y="114" fontSize="4" fill="#111">Plots uploaded in the <tspan fontWeight="700">AN-15-058</tspan></text>
          </g>
        </>
      )}
      {n === 4 && (
        <>
          <text x="84" y="16" fontSize="9.500" fill="#a0303a" textAnchor="middle">Strategy (ii)</text>
          <g fontSize="4" fill="#222">
            <text x="34" y="36">The aim of the study is to determine the behavior of the</text>
            <text x="34" y="41">Mass resolution/Mass scale of ECAL at high mass</text>
            <text x="34" y="50">For each bin of M_ : <tspan fontWeight="700">resolution</tspan> = (M_ - M_)/M_</text>
            <text x="34" y="61">For each bin of M_ : <tspan fontWeight="700">scale</tspan> = M_/M_</text>
            <text x="34" y="72">Distributions fitted with <tspan fontWeight="700">Crystal Ball</tspan> function</text>
            <text x="34" y="77">(Gaussian core + power-law tail). (Trial also with DCB)</text>
          </g>
        </>
      )}
      <text x="159" y="119" fontSize="4" fill="#666">{n}</text>
      <path d="M2 126.5h168" stroke="#800000" strokeWidth="3" />
      <text x="85" y="128" fontSize="3" fill="#e0baba" textAnchor="middle">Giuseppe Fasanella, ULB Bruxelles</text>
    </MiniSvg>
  );
}

const foldMark = (open?: boolean) => (
  <svg width="10" height="10"><path d={open ? "M1 2h8L5 8z" : "M2 1v8l5-4z"} fill="#9cc3e6" stroke="#23496e" /></svg>
);
const range = (n: number) => Array.from({ length: n }, (_, i) => i);

function GridDots() {
  return (
    <Dots stroke="#b4b4b4" strokeDasharray="1 5.2" shapeRendering="crispEdges">
      {range(13).map(i => <path key={i} d={`M${61.5 + i * 62} 5V632`} />)}
      {range(10).map(i => <path key={i} d={`M5 ${61.5 + i * 62}H862`} />)}
    </Dots>
  );
}

const Prime = () => <><i>Z</i>′</>;
const SpinArt = () => <Spin width="12" height="16"><path d="M2 5h8L6 1zM2 11h8l-4 4z" fill="#777" /></Spin>;
const ComboArt = () => <svg width="9" height="7"><path d="M0 0h9L4.5 7z" fill="#777" /></svg>;

export default function App() {
  return (
    <Shell>
      <Global />
      <Defs aria-hidden="true">
        <linearGradient id="paper" x1="0" y1="0" x2="1" y2="1"><stop stopColor="#fff" /><stop offset="1" stopColor="#d9dcd8" /></linearGradient>
        <linearGradient id="steel" x1="0" y1="0" x2="1" y2="1"><stop stopColor="#bcbcbc" /><stop offset="1" stopColor="#f0f0f0" /></linearGradient>
        <linearGradient id="sea" x1="0" y1="0" x2="0" y2="1"><stop stopColor="#4f7aa8" /><stop offset="1" stopColor="#d5e2f0" /></linearGradient>
      </Defs>

      <TopPanel>
        <WindowTitle>Mass_resolution_DPG.odp - LibreOffice Impress</WindowTitle>
        <Tray>
          <TrayItem><svg width="18" height="18"><circle cx="9" cy="9" r="9" fill="#f9cf1c" /><path d="M9 9L1.2 4.5A9 9 0 0 1 17 5H9z" fill="#e33b2e" /><path d="M9 9L1.2 4.5A9 9 0 0 0 8 18l4-7z" fill="#3ea748" /><circle cx="9" cy="9" r="4.2" fill="#fff" /><circle cx="9" cy="9" r="3.2" fill="#4a8af4" /></svg></TrayItem>
          <TrayItem><svg width="14" height="18"><path d="M7 0a7 7 0 0 1 7 7c0 5-4 9-7 11v-4a7 7 0 0 1 0-14z" fill="#4fae3e" /></svg></TrayItem>
          <TrayItem><svg width="14" height="16"><path d="M7 0l7 4v8l-7 4-7-4V4z" fill="#8b8983" /><path d="M5 4l3 1-1 4-3-1zM10 6l3 1-1 4-3-1zM5 10l3 1-1 3-3-1z" fill="#eceae5" /></svg></TrayItem>
          <TrayItem $gap={3}><svg width="23" height="13"><rect width="23" height="13" rx="2" fill="#dfdbd2" /><path d="M2 3h19M2 6h19" stroke="#444" strokeWidth="2" strokeDasharray="2 1" /><path d="M5 10h13" stroke="#444" strokeWidth="2" /></svg>en</TrayItem>
          <TrayItem><svg width="18" height="13"><rect width="18" height="13" fill="#19b2ee" /><path d="M1 1l8 7 8-7M1 12l5-6M17 12l-5-6" stroke="#123" fill="none" /></svg></TrayItem>
          <TrayItem><svg width="20" height="12"><rect x="1" y="1" width="16" height="10" rx="2" fill="none" stroke="#b9b6ae" strokeWidth="2" /><path d="M3 3h5v6H3z" fill="#dfdbd2" /><path d="M19 4v4" stroke="#b9b6ae" strokeWidth="2" /></svg></TrayItem>
          <TrayItem><svg width="20" height="15"><path d="M1 5c5-5 13-5 18 0M4 8c3-4 9-4 12 0M7 11c1-2 5-2 6 0" stroke="#dfdbd2" strokeWidth="1.5" fill="none" /><circle cx="10" cy="13" r="1.5" fill="#dfdbd2" /></svg></TrayItem>
          <TrayItem><svg width="21" height="15"><path d="M0 5h3l4-4v13l-4-4H0z" fill="#dfdbd2" /><path d="M10 5c2 2 2 4 0 6M13 3c3 3 3 6 0 9M16 1c5 4 5 9 0 13" stroke="#dfdbd2" strokeWidth="1.5" fill="none" /></svg></TrayItem>
          <TrayItem>11.37</TrayItem>
          <TrayItem $gap={5}><svg width="13" height="14"><path d="M6.5 0c3 0 4 2 3.5 5L8.5 8c0 2 4 2 4.500 3v3H0v-3c.5-1 4.500-1 4.500-3L3 5C2.500 2 3.500 0 6.500 0z" fill="#dfdbd2" /></svg>gfasanel</TrayItem>
          <TrayItem><svg width="16" height="16"><circle cx="8" cy="8" r="5" fill="none" stroke="#dfdbd2" strokeWidth="2" /><path d="M8 0v8M2 2l2 2M14 2l-2 2M2 14l2-2M14 14l-2-2M0 8h3M13 8h3M8 13v3" stroke="#dfdbd2" strokeWidth="2" /></svg></TrayItem>
        </Tray>
      </TopPanel>

      <MenuBar>
        {menus.map(([a, k, b]) => <MenuItem key={a + k + b}>{a}{k && <u>{k}</u>}{b}</MenuItem>)}
        <MenuClose aria-label="Chiudi documento"><svg width="8" height="8"><path d="M1 1l6 6M7 1L1 7" stroke="#5d7287" strokeWidth="2" /></svg></MenuClose>
      </MenuBar>

      <Toolbar>
        <Grip />
        <Tools items={["fresh", "save", "|", "edit:*", "|", "pdf", "print", "|", "spell", "auto:*", "|", "cut", "copy", "paste:v", "brush", "|", "undo:v", "redo:-v", "|", "table:v", "globe", "|", "dots:*", "|", "zoom:v", "::", "addSlide:v", "layout:v", "setsq", "|", "screen"]} />
      </Toolbar>
      <Toolbar>
        <Grip />
        <Combo $w={195}><input aria-label="Nome carattere" defaultValue="Liberation Sans" /><button aria-label="Caratteri"><ComboArt /></button></Combo>
        <Rule />
        <Combo $w={77}><input aria-label="Dimensione carattere" defaultValue="18" /><button aria-label="Dimensioni"><ComboArt /></button></Combo>
        <Rule />
        <Tools items={["bold", "italic", "under", "shade", "|", "al:*", "ac", "ar", "aj", "|", "list", "left", "right", "up", "down", "grow", "shrink", "|", "charFmt", "paraFmt", "list", "|", "palette:v"]} />
      </Toolbar>

      <Main>
        <Editor>
          <EditorPane>
            <Tabs role="tablist">
              {["Normale", "Struttura", "Note", "Stampati", "Ordine diapositive"].map((t, i) => <Tab key={t} role="tab" $on={i === 0}>{t}</Tab>)}
            </Tabs>
            <Workspace>
              <Slide>
                <GridDots />
                <Title>Mass <Typo>resolution</Typo>/scale <Typo>strategy</Typo></Title>
                <Bullets>
                  <li>The <Typo>aim</Typo> <Typo>of</Typo> <Typo>the</Typo> <Typo>study</Typo> <Typo>is</Typo> <Typo>to</Typo> <Typo>determine</Typo> <Typo>the</Typo> <b><Typo>behavior</Typo></b> <Typo>of</Typo> <Typo>the</Typo><br />
                    Mass <Typo>resolution</Typo>/Mass scale <Typo>of</Typo> ECAL <b><Typo>at</Typo> <Typo>high</Typo> mass</b></li>
                </Bullets>
                <Inset>
                  <svg width="421" height="320"><text x="-20" y="396" transform="rotate(-31 -20 396)" fontSize="148" fontFamily="Liberation Sans, sans-serif" fill="none" stroke="#d8d8d8">DRAFT</text></svg>
                  <Caption $x={118} $y={3}>Table 1: <Prime /> Generated samples</Caption>
                  <Sample $y={30} $w={252}>
                    <colgroup><col width="172" /><col /></colgroup>
                    <thead><tr><th>13 TeV generated samples</th><th><Prime /> mass [TeV]</th></tr></thead>
                    <tbody><tr><td>S14_ZprimeToEE_M5000_20bx25/</td><td><Prime />(5 TeV)</td></tr></tbody>
                  </Sample>
                  <Caption $x={82} $y={92}>n the analysis are listed in the corresponding table.</Caption>
                  <Caption $x={99} $y={118}>Table 2: Drell–Yan Generated samples</Caption>
                  <Yan $y={145} $w={311}>
                    <colgroup><col width="119" /><col width="98" /><col /></colgroup>
                    <thead><tr><th>nerated samples</th><th>Mass Range</th><th>Cross-section [pb]</th></tr></thead>
                    <tbody>{yan.map(r => <tr key={r[0]}>{r.map(c => <td key={c}>{c}</td>)}</tr>)}</tbody>
                  </Yan>
                </Inset>
                <Frame>
                  <Grid><tbody>{range(10).map(i => <tr key={i}><td /><td /></tr>)}</tbody></Grid>
                  {[[0, 0], [50, 0], [100, 0], [0, 50], [100, 50], [0, 100], [50, 100], [100, 100]].map(([x, y]) => <Knob key={`${x}-${y}`} $x={x} $y={y} />)}
                </Frame>
                <Address href="#fit">https://gfasanel.web.cern.ch/gfasanel/Zprime/Res_scale/fit_results/</Address>
                <Plots><Typo>Plots</Typo> <Typo>uploaded</Typo> in <Typo>the</Typo> <b>AN-15-058</b></Plots>
                <PageNo>2</PageNo>
                <SlideFoot>Giuseppe <Typo>Fasanella</Typo>, ULB Bruxelles</SlideFoot>
              </Slide>
            </Workspace>
            <HBar>
              <End $r="6px 0 0 6px" aria-label="Sinistra"><Tip d={LEFT} /></End>
              <Trough $h><Space $n={318} /><Thumb $h $n={531} /><Space $n={315} /></Trough>
              <End $r="0 6px 6px 0" aria-label="Destra"><Tip d={RIGHT} /></End>
            </HBar>
          </EditorPane>
          <ScrollSide><VScroll a={157} t={340} b={155} /></ScrollSide>
        </Editor>
        <Splitter><svg width="4" height="36"><path d="M1 0l3 2-3 2zM1 32l3 2-3 2z" /><path d="M1.5 7v22" stroke="#000" strokeDasharray="2 2" /></svg></Splitter>
        <Side $w={148}>
          <SideHead><h2>Attività</h2><button>Vista <Caret /></button><button aria-label="Chiudi attività"><Cross /></button></SideHead>
          <SideBody>
            <Fold>{foldMark()}Pagine Master</Fold>
            <Fold $open>{foldMark(true)}Layout</Fold>
            <ListRow>
              <Scroll $p="1px 3px 0 2px">
                {layouts.map((l, i) => <li key={i}><LayoutCell $on={i === 2} aria-label={`Layout ${i + 1}`}><LayoutArt {...l} /></LayoutCell></li>)}
              </Scroll>
              <VScroll a={1} t={470} b={110} />
            </ListRow>
            <Fold>{foldMark()}Struttura tabella</Fold>
            <Fold>{foldMark()}Animazione personalizzata</Fold>
            <Fold>{foldMark()}Cambio diapositiva</Fold>
          </SideBody>
        </Side>
        <Side $w={238} $line>
          <SideHead><h2>Diapositive</h2><button aria-label="Chiudi diapositive"><Cross /></button></SideHead>
          <SideBody>
            <ListRow>
              <Scroll $p="8px 0 0 7px" $gap={10}>
                {[1, 2, 3, 4, 5].map(n => <li key={n}><ThumbItem $on={n === 2}>{n}<MiniSlide n={n} /></ThumbItem></li>)}
              </Scroll>
              <VScroll a={1} t={181} b={480} />
            </ListRow>
          </SideBody>
        </Side>
      </Main>

      <BottomBar>
        <Grip />
        <Tools items={["arrowSel", "|", "line", "arrowLine", "rect", "oval", "text:*", "|", "curve:v", "connector:v", "diamond:v", "smile:v", "dbl:v", "flow:v", "callout:v", "star:v", "|", "points", "glue", "|", "fontwork", "shapes", "gallery", "|", "rotate", "align:v", "arrange:v", "|", "extrude", "inter", "::", "table:v", "|", "border:v", "bucket:v", "|", "cell:v"]} />
        <PickBox $w={86}>
          <select aria-label="Tipo di riempimento" defaultValue="Colore"><option>Colore</option></select>
          <SpinArt />
        </PickBox>
        <PickBox $w={130}>
          <FillSelect aria-label="Colore di riempimento"><option value="bianco" /></FillSelect>
          <SpinArt />
          <Popup>
            <ul role="listbox">
              {colours.map(([name, c]) => <Swatch key={name} role="option" aria-selected={name === "Bianco"} $c={c} $on={name === "Bianco"}>{name}</Swatch>)}
            </ul>
            <VScroll a={9} t={31} b={96} />
            <Pointer width="14" height="22"><path d="M1 1v16l4-4 3 7 3-1-3-7h5z" fill="#fff" stroke="#000" /></Pointer>
          </Popup>
        </PickBox>
        <Rule />
        <Tools items={["merge", "split"]} />
        <More aria-label="Altri comandi">»</More>
      </BottomBar>
    </Shell>
  );
}
